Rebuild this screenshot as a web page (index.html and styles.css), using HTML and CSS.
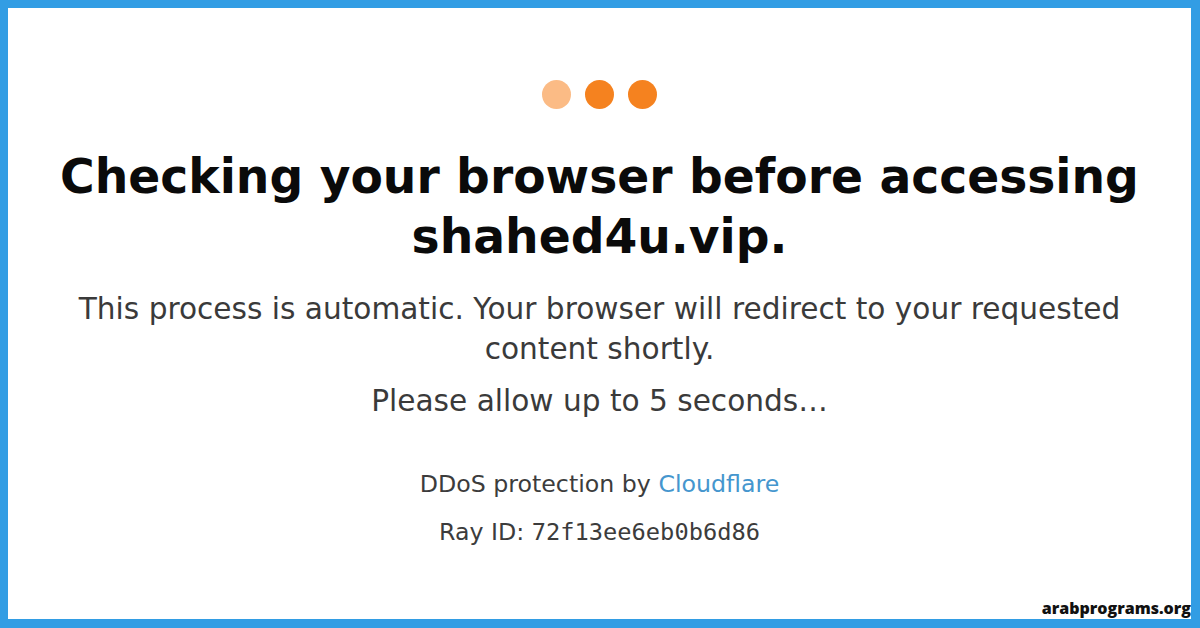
FILE: index.html
```html
<!DOCTYPE html>
<html lang="en">
<head>
	<meta charset="UTF-8">
	<title>Just a moment...</title>
	<link rel="stylesheet" href="styles.css">
</head>
<body>

	<div class="frame">
		<div class="content">
			<div class="dots">
				<span class="dot dot-light"></span>
				<span class="dot"></span>
				<span class="dot"></span>
			</div>

			<h1 class="title">Checking your browser before accessing shahed4u.vip.</h1>

			<p class="text">This process is automatic. Your browser will redirect to your requested content shortly.</p>
			<p class="text wait">Please allow up to 5 seconds&hellip;</p>

			<div class="footer">
				<p class="small">DDoS protection by <a href="#" class="link">Cloudflare</a></p>
				<p class="small ray-line">Ray ID: <code class="ray">72f13ee6eb0b6d86</code></p>
			</div>
		</div>

		<div class="watermark">arabprograms.org</div>
	</div>

</body>
</html>
```

FILE: styles.css
```css
*{
	padding: 0;
	margin: 0;
	box-sizing: border-box;
}
html, body{
	width: 1200px;
	height: 628px;
	overflow: hidden;
	background: #fff;
}
.frame{
	position: relative;
	width: 1200px;
	height: 628px;
	border-style: solid;
	border-color: #329de4;
	border-width: 8px 9px 9px 8px;
	background: #fff;
	display: flex;
	justify-content: center;
}
.content{
	width: 1110px;
	padding-top: 72px;
	display: flex;
	flex-direction: column;
	align-items: center;
	text-align: center;
	font-family: "DejaVu Sans", "Liberation Sans", sans-serif;
}
.dots{
	display: flex;
	gap: 14px;
	height: 29px;
}
.dot{
	width: 29px;
	height: 29px;
	border-radius: 50%;
	background: #f5821f;
}
.dot-light{
	background: #fbbb85;
}
.title{
	margin-top: 38px;
	font-size: 47.2px;
	line-height: 60px;
	font-weight: bold;
	color: #0a0a0a;
}
.text{
	font-size: 29.6px;
	line-height: 40px;
	color: #3a3a3a;
}
.text:first-of-type{
	margin-top: 22px;
}
.wait{
	margin-top: 12px;
}
.footer{
	margin-top: 46px;
}
.small{
	font-size: 23.7px;
	line-height: 34px;
	color: #3c3c3c;
}
.ray-line{
	margin-top: 14px;
}
.link{
	color: #4596ce;
	text-decoration: none;
}
.ray{
	font-family: "DejaVu Sans Mono", "Liberation Mono", monospace;
	font-size: 23.7px;
}
.watermark{
	position: absolute;
	right: 0;
	bottom: 0;
	font-family: "Open Sans", "Noto Sans", sans-serif;
	font-weight: 800;
	font-size: 16px;
	line-height: 22px;
	color: #111;
}
```
